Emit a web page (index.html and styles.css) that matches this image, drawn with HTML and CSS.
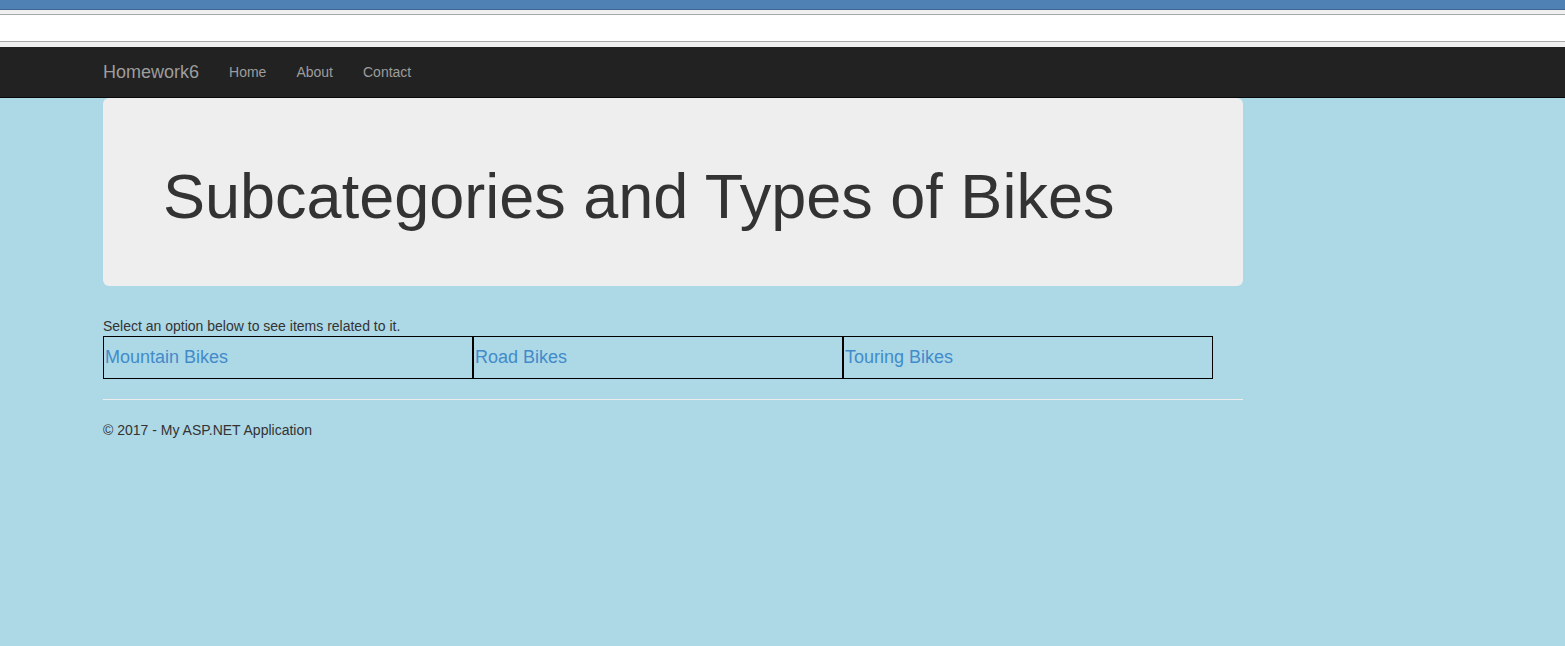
FILE: index.html
```html
<!DOCTYPE html>
<html>
<head>
<meta charset="utf-8">
<title>Subcategories and Types of Bikes</title>
<link rel="stylesheet" href="styles.css">
</head>
<body>
<div class="chrome">
  <div class="chrome-blue"></div>
  <div class="chrome-gap"></div>
  <div class="chrome-field"></div>
  <div class="chrome-gap2"></div>
</div>
<nav class="navbar">
  <div class="container nav-inner">
    <a class="brand" href="#">Homework6</a>
    <ul class="nav">
      <li><a href="#">Home</a></li>
      <li><a href="#">About</a></li>
      <li><a href="#">Contact</a></li>
    </ul>
  </div>
</nav>
<div class="container body-content">
  <div class="jumbotron">
    <h1>Subcategories and Types of Bikes</h1>
  </div>
  <p class="intro">Select an option below to see items related to it.</p>
  <table class="cats">
    <tr>
      <td><a href="#">Mountain Bikes</a></td>
      <td><a href="#">Road Bikes</a></td>
      <td><a href="#">Touring Bikes</a></td>
    </tr>
  </table>
  <hr class="rule">
  <footer>
    <p>&copy; 2017 - My ASP.NET Application</p>
  </footer>
</div>
</body>
</html>
```
FILE: styles.css
```css
html, body {
  margin: 0;
  padding: 0;
}
body {
  background: #add8e6;
  font-family: "Liberation Sans", Arial, Helvetica, sans-serif;
  font-size: 14px;
  line-height: 20px;
  color: #333;
  min-height: 646px;
}
.chrome-blue {
  height: 9px;
  background: #4f81b4;
  border-bottom: 1px solid #3d6590;
}
.chrome-gap {
  height: 4px;
  background: #f0f0f0;
  border-bottom: 1px solid #a8a8a8;
}
.chrome-field {
  height: 26px;
  background: #fff;
  border-bottom: 1px solid #a8a8a8;
}
.chrome-gap2 {
  height: 5px;
  background: #f0f0f0;
}
.container {
  width: 1140px;
  margin-left: 103px;
}
.navbar {
  background: #222;
  border-bottom: 1px solid #080808;
  height: 50px;
}
.nav-inner {
  display: flex;
  align-items: stretch;
  height: 50px;
}
.brand {
  font-size: 18px;
  line-height: 20px;
  padding: 15px 15px 15px 0;
  color: #9d9d9d;
  text-decoration: none;
}
.nav {
  list-style: none;
  margin: 0;
  padding: 0;
  display: flex;
}
.nav a {
  display: block;
  padding: 15px;
  line-height: 20px;
  color: #9d9d9d;
  text-decoration: none;
  font-size: 14px;
}
.jumbotron {
  background: #eee;
  border-radius: 6px;
  padding: 48px 60px;
}
.jumbotron h1 {
  margin: 16px 0 7px;
  font-size: 63px;
  line-height: 69px;
  font-weight: 500;
  color: #333;
}
.intro {
  margin: 30px 0 0;
  font-size: 14px;
}
.cats {
  border-collapse: separate;
  border-spacing: 0;
  width: 1110px;
  table-layout: fixed;
}
.cats td {
  border: 1px solid #000;
  padding: 7px 1px 8px;
  font-size: 18px;
  line-height: 26px;
  vertical-align: top;
}
.cats a {
  color: #428bca;
  text-decoration: none;
}
.rule {
  margin: 20px 0;
  border: 0;
  border-top: 1px solid #eee;
}
footer p {
  margin: 0 0 10px;
}
```
